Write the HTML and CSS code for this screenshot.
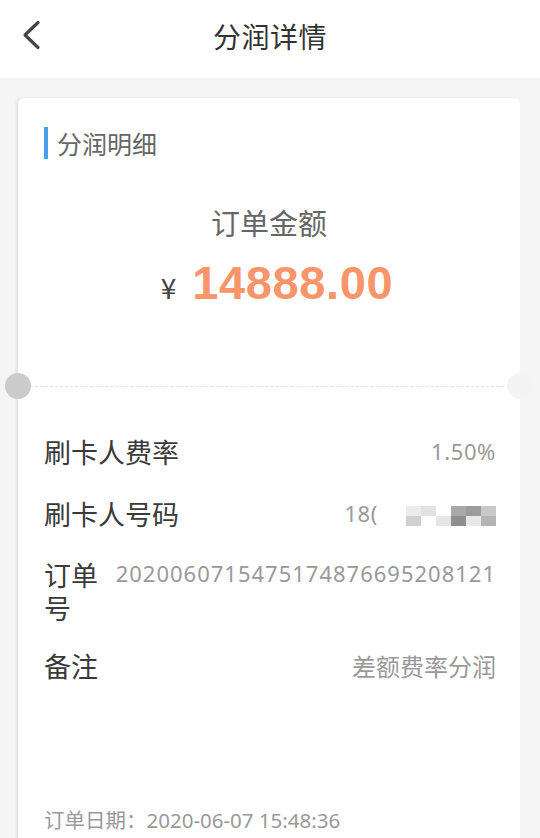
FILE: index.html
```html
<!DOCTYPE html>
<html lang="zh-CN">
<head>
<meta charset="utf-8">
<link rel="stylesheet" href="styles.css">
</head>
<body>
<div class="page">
  <header class="nav">
    <svg class="back" width="20" height="30" viewBox="0 0 20 30"><path d="M17 2.5 L4 15 L17 27.5" fill="none" stroke="#444" stroke-width="3.2" stroke-linecap="round" stroke-linejoin="round"/></svg>
    <div class="nav-title">分润详情</div>
  </header>
  <main class="content">
    <section class="card">
      <div class="top">
        <div class="sec-title"><span class="bar"></span>分润明细</div>
        <div class="amount-label">订单金额</div>
        <div class="amount"><span class="yen">¥</span><span class="num">14888.00</span></div>
      </div>
      <div class="divider">
        <span class="notch notch-l"></span>
        <span class="dash"></span>
        <span class="notch notch-r"></span>
      </div>
      <div class="rows">
        <div class="row"><div class="label">刷卡人费率</div><div class="value">1.50%</div></div>
        <div class="row"><div class="label">刷卡人号码</div><div class="value phone">18(<span class="mosaic"><i class="m1"></i><i class="m2"></i><i class="m3"></i><i class="m4"></i><i class="m5"></i><i class="m6"></i><i class="m7"></i><i class="m8"></i><i class="m9"></i><i class="m10"></i><i class="m11"></i><i class="m12"></i></span></div></div>
        <div class="row row-top"><div class="label narrow">订单号</div><div class="value long">2020060715475174876695208121</div></div>
        <div class="row"><div class="label">备注</div><div class="value cjk">差额费率分润</div></div>
      </div>
      <div class="date">订单日期：2020-06-07 15:48:36</div>
    </section>
  </main>
</div>
</body>
</html>
```
FILE: styles.css
```css
* { box-sizing: border-box; margin: 0; padding: 0; }
html, body { width: 540px; height: 838px; overflow: hidden; }
body {
  background: #f5f5f5;
  font-family: "Noto Sans CJK SC", "Noto Sans", sans-serif;
}
.page { display: flex; flex-direction: column; height: 838px; }
.nav {
  flex: 0 0 78px;
  height: 78px;
  background: #fff;
  display: flex;
  align-items: center;
  justify-content: center;
  position: relative;
}
.back { position: absolute; left: 21px; top: 20px; }
.nav-title { font-size: 28px; color: #333; letter-spacing: 0.5px; margin-top: -6px; }
.content { padding: 20px 20px 0 18px; flex: 1 0 auto; }
.card {
  background: #fff;
  border-radius: 6px 6px 0 0;
  box-shadow: -2px 0 3px rgba(0,0,0,0.08);
  height: 760px;
  display: flex;
  flex-direction: column;
}
.top { padding: 29px 0 0 26px; height: 288px; }
.sec-title {
  display: flex;
  align-items: center;
  font-size: 25px;
  color: #666;
  height: 32px;
}
.bar { width: 4px; height: 32px; background: #4a9fe8; margin-right: 9px; }
.amount-label {
  text-align: center;
  font-size: 29px;
  color: #666;
  margin-top: 42px;
  margin-left: -26px;
}
.amount {
  display: flex;
  justify-content: center;
  align-items: baseline;
  margin-left: -10px;
  margin-top: 12px;
}
.yen { font-size: 28px; color: #444; margin-right: 16px; }
.num {
  font-family: "Liberation Sans", Arial, sans-serif;
  font-weight: bold;
  font-size: 47px;
  letter-spacing: 0.6px;
  color: #f8956a;
}
.divider { position: relative; height: 0; display: flex; align-items: center; }
.dash { flex: 1; border-top: 1.5px dashed #e2e2e2; margin: 0 16px 0 12px; }
.notch {
  position: absolute;
  top: -13px;
  width: 26px; height: 26px; border-radius: 50%;
}
.notch-l { left: -13px; background: #cbcbcb; }
.notch-r { right: -13px; background: #f4f4f4; }
.rows { padding: 34px 24px 0 26px; display: flex; flex-direction: column; }
.row {
  display: flex;
  justify-content: space-between;
  align-items: center;
  height: 62px;
}
.row-top { align-items: flex-start; height: 90px; padding-top: 14px; }
.label { font-size: 27px; color: #3a3a3a; white-space: nowrap; }
.label.narrow { width: 62px; white-space: normal; line-height: 33px; }
.value { font-size: 22px; color: #999; white-space: nowrap; font-family: "Noto Sans", sans-serif; letter-spacing: 0.6px; }
.value.long { letter-spacing: 1px; margin-top: 0; }
.value.cjk { font-family: "Noto Sans CJK SC", sans-serif; font-size: 24px; letter-spacing: 0; }
.phone { display: flex; align-items: center; }
.mosaic { display: grid; grid-template-columns: repeat(6, 15px); grid-template-rows: 10px 10px; margin-left: 28px; margin-top: 6px; }
.mosaic i { display: block; }
.m1 { background: #ececec; }
.m2 { background: #e2e2e2; }
.m3 { background: #fff; }
.m4 { background: #a9a9a9; }
.m5 { background: #9c9c9c; }
.m6 { background: #c9c9c9; }
.m7 { background: #d0d0d0; }
.m8 { background: #fff; }
.m9 { background: #e6e6e6; }
.m10 { background: #8f8f8f; }
.m11 { background: #e8e8e8; }
.m12 { background: #b4b4b4; }
.date {
  margin-top: auto;
  margin-bottom: 24px;
  padding-left: 26px;
  font-size: 20.5px;
  color: #999;
  font-family: "Noto Sans", "Noto Sans CJK SC", sans-serif;
}
```
